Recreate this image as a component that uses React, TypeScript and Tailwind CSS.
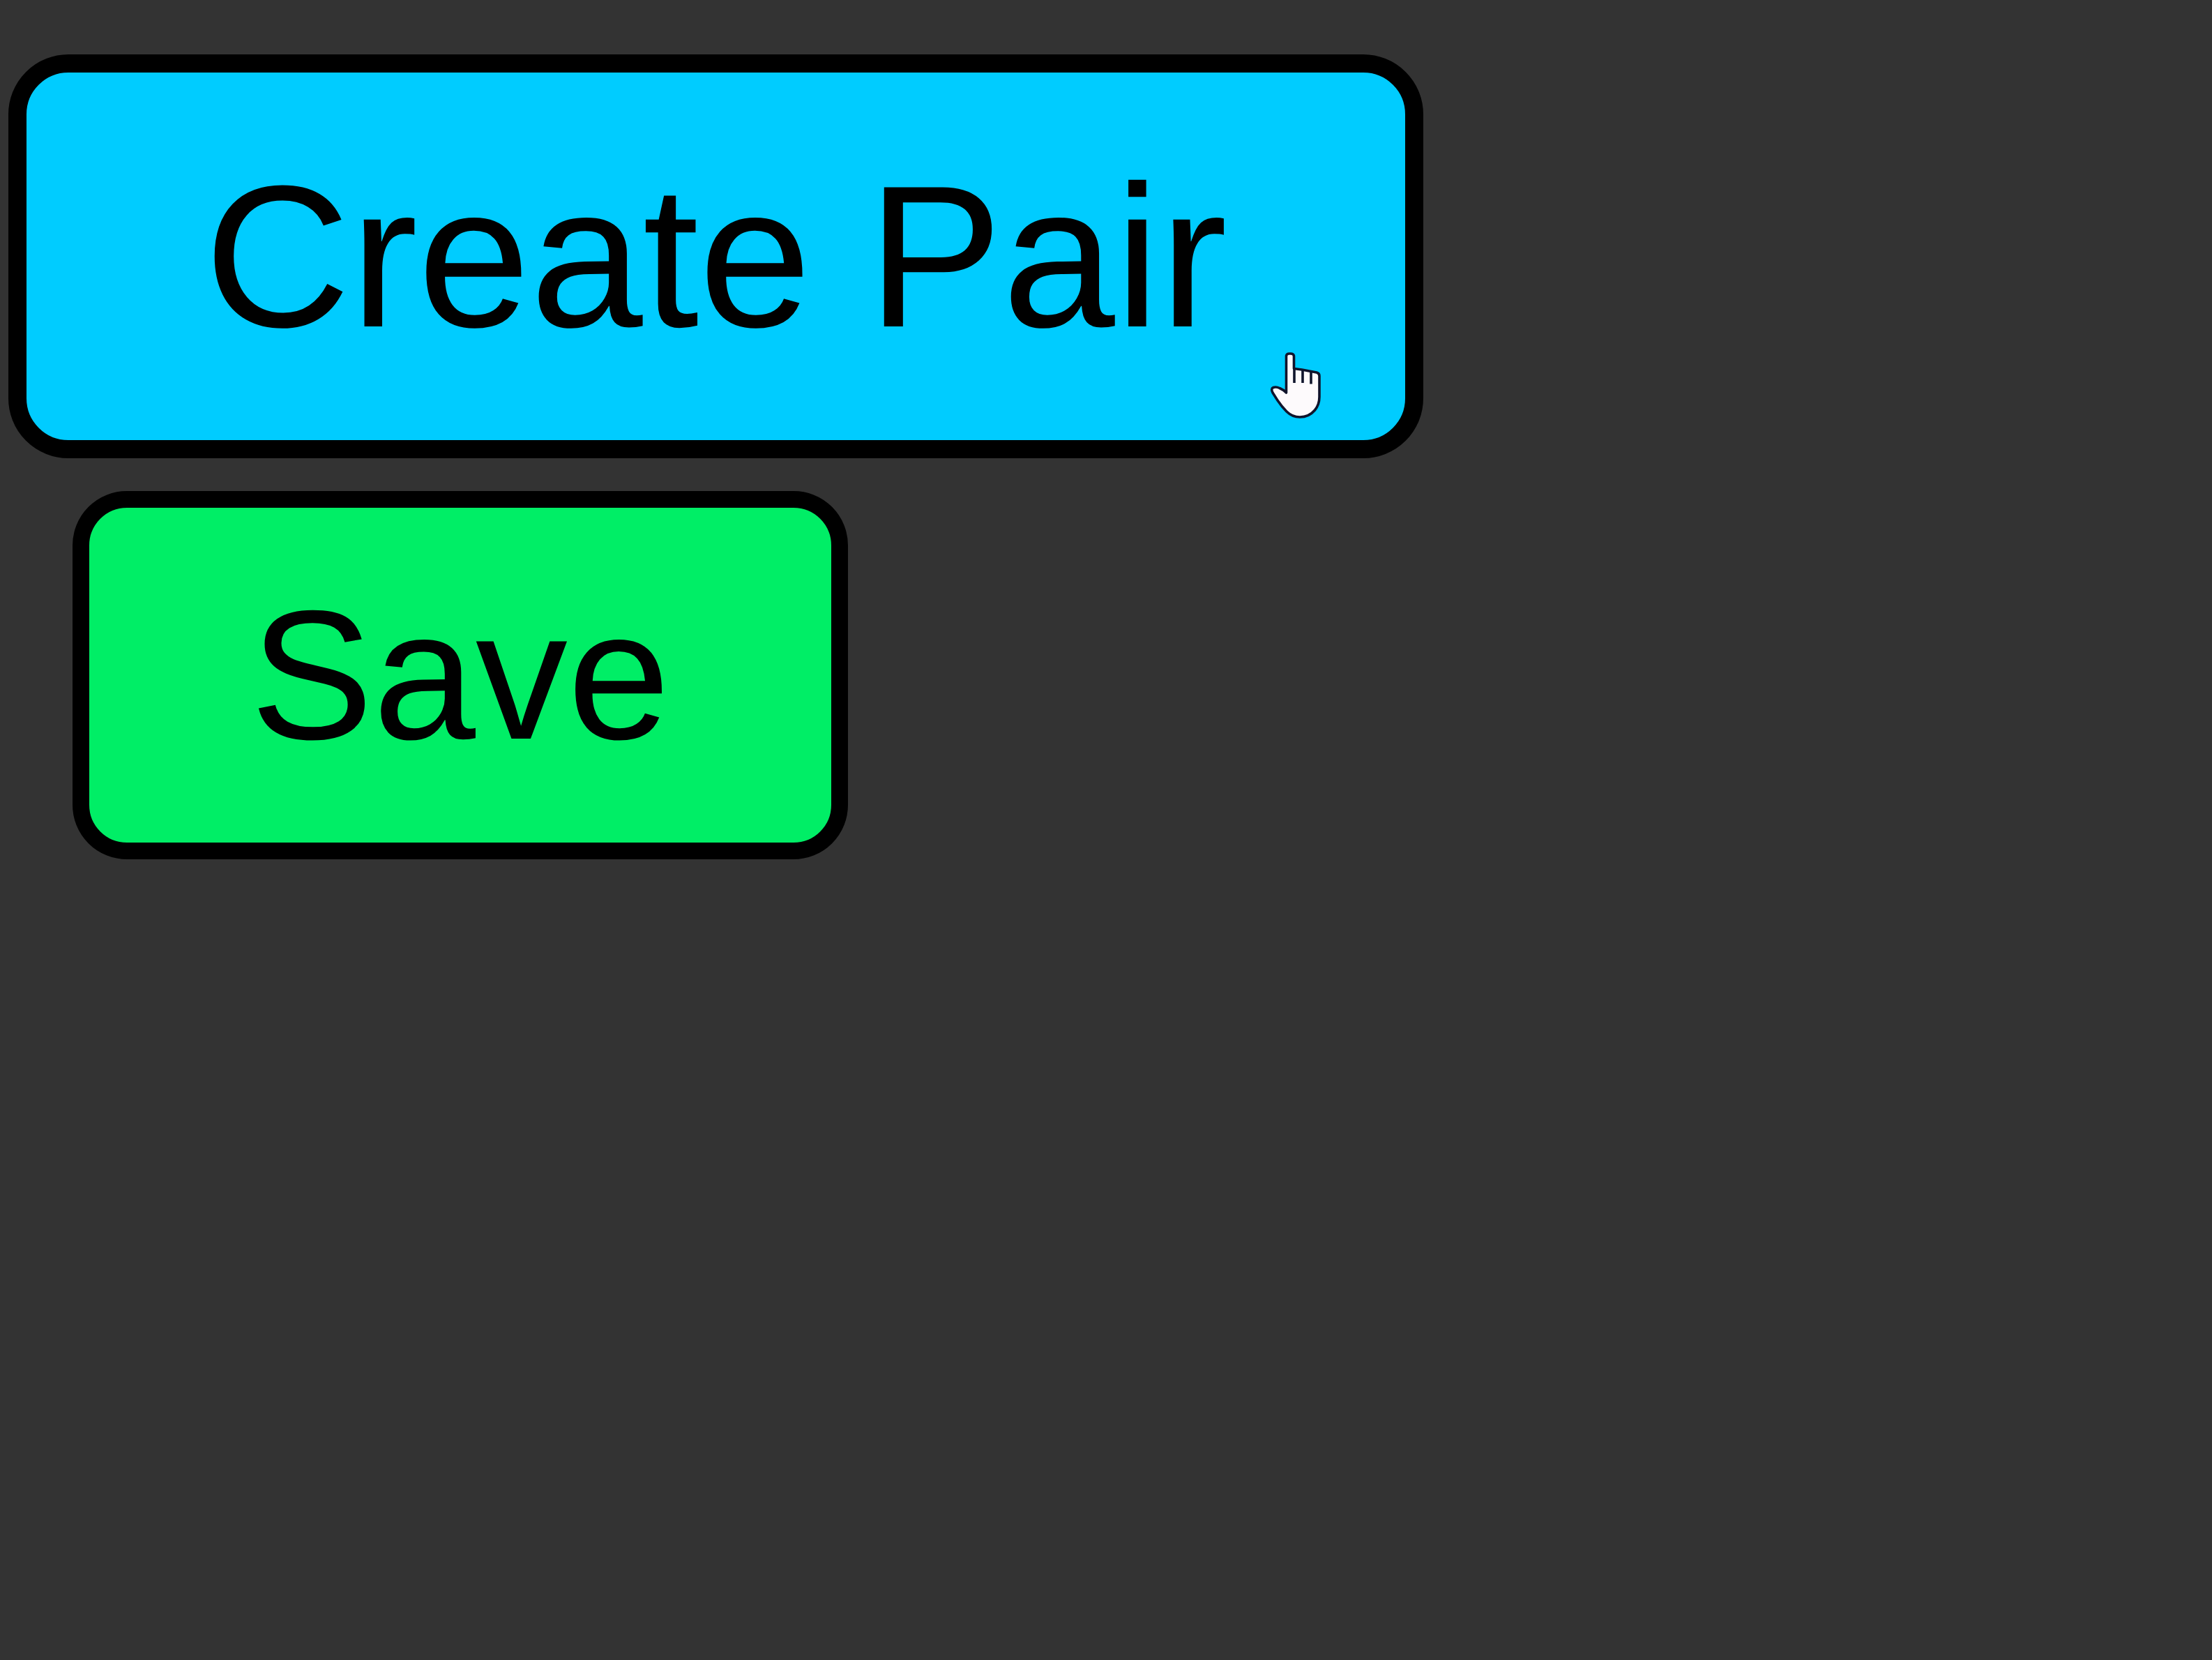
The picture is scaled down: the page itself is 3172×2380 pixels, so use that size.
function HandPointer() {
  return (
    <svg
      aria-hidden="true"
      viewBox="0 0 140 140"
      className="pointer-events-none absolute right-[83px] bottom-[10px] h-[140px] w-[140px]"
    >
      <path
        d="M52.5 82V30Q52.5 26 57 26H58.5Q63.5 26 63.5 30V47.5L75 49L88 51.5L96 53Q100 54 100 58V88Q100 99 93.5 107Q85 117 72 117Q61 117 53 109Q46 102 40 93L33 82Q30 76 34 74.5Q38 73 43 75.5Q49 78 52.5 82Z"
        fill="#fdfafc"
        stroke="#10142c"
        strokeWidth="3.6"
        strokeLinejoin="round"
      />
      <path
        d="M64 47V68M76 50V68M88 52V69.5"
        fill="none"
        stroke="#10142c"
        strokeWidth="3.6"
        strokeLinecap="butt"
      />
    </svg>
  );
}

export default function App() {
  return (
    <main className="flex min-h-screen flex-col items-start gap-[47px] bg-[#333333] pt-[78px] pl-3 font-['Liberation_Sans',Arial,sans-serif] text-black">
      <button
        type="button"
        className="relative cursor-pointer rounded-[86px] border-[26px] border-black bg-[#00ccff] px-[255px] py-[96px] text-[290px] leading-[335px] whitespace-nowrap"
      >
        Create Pair
        <HandPointer />
      </button>
      <button
        type="button"
        className="ml-[92px] cursor-pointer rounded-[78px] border-[24px] border-black bg-[#00ee66] px-[231px] py-[88px] text-[264px] leading-[304px] whitespace-nowrap"
      >
        Save
      </button>
    </main>
  );
}
